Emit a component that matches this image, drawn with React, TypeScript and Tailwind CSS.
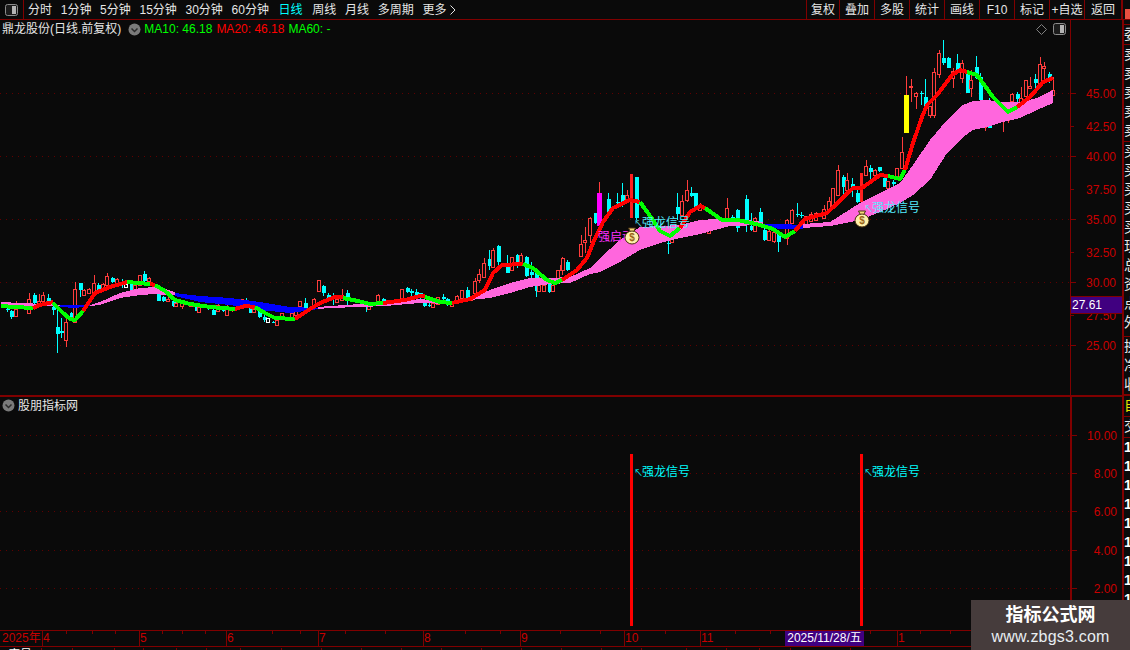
import React from "react";

type Pt = [number, number];
type Band = [number, number, number];
type Candle = [number, number, number, number, number, string];

// candles read off 3x crops: [x, wick top, body top, body bottom, wick bottom, kind]
const zone = (ox: number, oy: number, rows: Candle[]): Candle[] =>
    rows.map(([x, hi, t, b, lo, k]) => [
        Math.round(ox + x / 3),
        oy + hi / 3,
        oy + t / 3,
        oy + b / 3,
        oy + lo / 3,
        k,
    ]);

const candles: Candle[] = [
    ...zone(0, 260, [
        [20, 140, 146, 149, 155, "c"],
        [33, 150, 152, 170, 176, "c"],
        [48, 123, 148, 170, 172, "r"],
        [72, 130, 138, 145, 150, "r"],
        [88, 100, 118, 160, 162, "r"],
        [103, 100, 105, 130, 132, "c"],
        [118, 103, 125, 135, 138, "r"],
        [130, 95, 105, 125, 128, "r"],
        [145, 102, 113, 125, 130, "c"],
        [158, 125, 140, 150, 165, "c"],
        [172, 150, 200, 222, 278, "c"],
        [184, 175, 212, 218, 235, "c"],
        [199, 170, 187, 242, 262, "r"],
        [213, 155, 160, 175, 178, "c"],
        [226, 66, 88, 188, 190, "r"],
        [241, 70, 70, 90, 110, "c"],
        [253, 88, 92, 105, 108, "r"],
        [268, 85, 88, 100, 103, "r"],
        [283, 45, 70, 100, 102, "r"],
        [295, 70, 75, 90, 92, "c"],
        [310, 70, 72, 85, 88, "r"],
        [322, 40, 48, 75, 78, "r"],
        [337, 50, 55, 65, 70, "c"],
        [352, 55, 58, 70, 72, "r"],
        [365, 58, 70, 72, 85, "c"],
        [378, 70, 72, 82, 83, "w"],
        [392, 70, 72, 92, 95, "c"],
        [406, 72, 75, 90, 92, "r"],
        [421, 45, 45, 75, 78, "r"],
        [433, 33, 42, 62, 72, "c"],
        [447, 52, 55, 65, 68, "r"],
        [475, 95, 100, 122, 124, "c"],
        [490, 108, 112, 122, 126, "c"],
        [503, 110, 118, 124, 126, "r"],
        [518, 118, 123, 138, 142, "c"],
        [528, 126, 130, 140, 142, "r"],
        [545, 125, 130, 140, 147, "r"],
        [572, 125, 128, 138, 140, "r"],
        [587, 130, 135, 152, 154, "c"],
        [598, 140, 143, 158, 160, "r"],
        [625, 135, 138, 148, 150, "c"],
        [640, 148, 150, 165, 166, "c"],
        [655, 132, 135, 155, 157, "r"],
        [668, 145, 148, 152, 155, "c"],
        [682, 135, 140, 167, 168, "r"],
        [695, 142, 145, 152, 155, "r"],
        [725, 116, 118, 130, 132, "r"],
        [737, 113, 122, 130, 132, "c"],
        [750, 142, 145, 158, 160, "c"],
        [763, 143, 148, 158, 160, "r"],
        [778, 150, 153, 172, 175, "c"],
        [793, 160, 172, 180, 187, "c"],
        [805, 175, 176, 188, 189, "w"],
        [820, 182, 185, 187, 188, "c"],
        [832, 178, 180, 197, 198, "r"],
        [847, 158, 160, 178, 180, "r"],
        [862, 170, 172, 182, 184, "r"],
        [875, 158, 160, 178, 180, "r"],
        [888, 150, 155, 165, 168, "r"],
        [900, 124, 125, 140, 142, "r"],
        [915, 115, 128, 145, 148, "c"],
        [943, 115, 118, 140, 142, "r"],
        [957, 60, 62, 95, 97, "r"],
    ]),
    ...zone(320, 230, [
        [10, 165, 168, 190, 197, "c"],
        [25, 188, 195, 210, 213, "c"],
        [38, 190, 200, 203, 225, "c"],
        [52, 205, 208, 218, 220, "r"],
        [67, 178, 195, 212, 214, "r"],
        [80, 180, 188, 205, 225, "c"],
        [137, 220, 222, 232, 245, "c"],
        [148, 225, 228, 238, 240, "r"],
        [175, 192, 195, 215, 217, "r"],
        [190, 205, 208, 215, 218, "c"],
        [245, 176, 178, 205, 207, "r"],
        [260, 172, 175, 185, 190, "c"],
        [273, 178, 182, 188, 198, "c"],
        [287, 178, 185, 200, 202, "c"],
        [300, 188, 190, 205, 208, "c"],
        [313, 215, 218, 228, 232, "c"],
        [328, 218, 224, 226, 232, "c"],
        [340, 217, 220, 232, 234, "r"],
        [355, 200, 203, 222, 224, "r"],
        [370, 192, 200, 208, 210, "c"],
        [382, 205, 208, 225, 227, "c"],
        [397, 215, 218, 228, 230, "r"],
        [410, 196, 198, 212, 214, "r"],
        [425, 180, 182, 205, 207, "r"],
        [440, 170, 180, 205, 207, "c"],
        [452, 202, 205, 210, 212, "r"],
        [466, 145, 155, 190, 192, "r"],
        [478, 118, 133, 150, 160, "r"],
        [493, 85, 100, 143, 145, "r"],
        [508, 60, 87, 108, 120, "c"],
        [520, 55, 60, 113, 115, "r"],
        [535, 45, 47, 97, 108, "c"],
        [562, 75, 110, 128, 130, "c"],
        [577, 80, 82, 122, 124, "r"],
        [590, 73, 75, 100, 115, "c"],
        [604, 70, 75, 97, 100, "r"],
        [617, 78, 82, 138, 140, "c"],
        [632, 95, 125, 135, 145, "c"],
        [647, 120, 125, 183, 200, "c"],
        [658, 140, 165, 183, 185, "r"],
        [672, 140, 165, 183, 185, "r"],
        [686, 155, 160, 185, 190, "c"],
        [700, 160, 165, 185, 187, "r"],
        [713, 120, 122, 160, 162, "r"],
        [727, 82, 105, 120, 135, "r"],
    ]),
    ...zone(560, 160, [
        [22, 300, 305, 330, 332, "c"],
        [8, 293, 295, 330, 332, "r"],
        [62, 225, 252, 290, 292, "r"],
        [76, 200, 240, 246, 280, "r"],
        [90, 172, 175, 225, 250, "r"],
        [105, 158, 160, 190, 192, "c"],
        [118, 65, 102, 104, 110, "r"],
        [145, 100, 118, 155, 175, "c"],
        [172, 100, 126, 130, 145, "c"],
        [187, 70, 105, 125, 140, "c"],
        [200, 90, 105, 125, 127, "r"],
        [229, 50, 52, 175, 180, "c"],
        [323, 235, 248, 252, 282, "c"],
        [337, 230, 232, 248, 250, "r"],
        [352, 100, 140, 162, 180, "c"],
        [365, 105, 125, 165, 167, "r"],
        [380, 60, 90, 122, 125, "r"],
        [394, 80, 98, 108, 110, "c"],
        [406, 98, 100, 142, 145, "c"],
        [420, 130, 135, 150, 152, "r"],
        [448, 203, 205, 220, 222, "r"],
        [502, 115, 145, 185, 187, "r"],
        [517, 165, 170, 185, 190, "c"],
        [530, 148, 150, 205, 215, "c"],
        [558, 105, 118, 185, 215, "c"],
        [572, 160, 198, 210, 212, "c"],
        [586, 172, 175, 215, 217, "r"],
        [600, 143, 155, 190, 192, "c"],
        [613, 205, 210, 240, 242, "c"],
        [628, 205, 215, 240, 242, "r"],
        [642, 215, 218, 245, 248, "r"],
        [655, 212, 215, 245, 275, "c"],
        [682, 178, 180, 235, 255, "r"],
        [696, 146, 150, 190, 192, "r"],
        [710, 130, 163, 166, 170, "c"],
        [724, 155, 164, 166, 175, "c"],
        [737, 168, 170, 195, 197, "r"],
        [752, 155, 162, 185, 187, "r"],
        [767, 155, 160, 180, 182, "r"],
        [792, 135, 148, 175, 177, "r"],
        [806, 110, 125, 150, 152, "r"],
        [820, 83, 85, 145, 147, "r"],
        [835, 15, 30, 105, 107, "r"],
        [848, 45, 50, 80, 110, "c"],
        [862, 40, 60, 90, 92, "r"],
        [875, 55, 72, 82, 110, "c"],
        [890, 90, 100, 125, 130, "c"],
        [917, 0, 20, 45, 47, "r"],
        [930, 15, 25, 35, 65, "c"],
        [945, 28, 30, 45, 47, "r"],
        [958, 20, 22, 32, 35, "c"],
        [973, 50, 55, 80, 82, "c"],
        [985, 63, 65, 85, 87, "r"],
        [1000, 60, 65, 72, 80, "c"],
    ]),
    ...zone(880, 40, [
        [52, 383, 385, 415, 417, "r"],
        [67, 292, 337, 385, 387, "r"],
        [79, 108, 165, 165, 165, "r"],
        [94, 118, 138, 143, 185, "r"],
        [109, 155, 160, 168, 207, "r"],
        [122, 152, 160, 163, 195, "c"],
        [136, 118, 172, 205, 207, "c"],
        [149, 198, 200, 225, 235, "r"],
        [163, 85, 97, 225, 235, "r"],
        [178, 30, 40, 103, 115, "r"],
        [190, 0, 55, 70, 75, "c"],
        [205, 50, 55, 83, 85, "c"],
        [218, 85, 95, 115, 145, "r"],
        [232, 42, 70, 92, 95, "c"],
        [247, 60, 70, 115, 130, "r"],
        [260, 95, 100, 158, 160, "c"],
        [274, 90, 120, 145, 170, "r"],
        [287, 48, 82, 115, 117, "c"],
        [300, 100, 110, 180, 182, "c"],
        [316, 180, 260, 262, 272, "r"],
        [328, 175, 253, 263, 265, "c"],
        [370, 225, 240, 242, 275, "r"],
        [385, 220, 230, 240, 250, "r"],
        [397, 158, 163, 185, 187, "r"],
        [411, 155, 162, 178, 205, "c"],
        [424, 140, 175, 190, 192, "r"],
        [438, 120, 122, 170, 172, "r"],
        [451, 110, 140, 146, 148, "r"],
        [465, 102, 118, 130, 150, "c"],
        [480, 52, 72, 135, 137, "r"],
        [493, 65, 78, 84, 130, "r"],
        [508, 95, 103, 115, 130, "c"],
        [520, 110, 150, 165, 167, "r"],
    ]),
];

const lineSegs: [string, Pt[]][] = [
    ["#00ff00", [[1, 306], [15, 307], [33, 308]]],
    ["#ff0000", [[33, 308], [40, 305], [53, 302]]],
    ["#00ff00", [[53, 303], [62, 312], [70, 319], [75, 320], [83, 311]]],
    ["#ff0000", [[83, 311], [95, 293], [110, 287], [127, 282]]],
    ["#00ff00", [[127, 282], [150, 284]]],
    ["#ff0000", [[150, 284], [155, 285]]],
    ["#00ff00", [[155, 285], [165, 291], [175, 300], [190, 304], [210, 307], [235, 309]]],
    ["#ff0000", [[235, 309], [245, 306], [255, 307]]],
    ["#00ff00", [[255, 307], [265, 313], [275, 318], [295, 319]]],
    ["#ff0000", [[295, 319], [310, 309], [320, 303], [335, 297], [343, 297]]],
    ["#00ff00", [[343, 298], [358, 301], [370, 304], [383, 303]]],
    ["#ff0000", [[383, 303], [405, 300], [420, 296], [425, 296]]],
    ["#00ff00", [[425, 297], [440, 302], [452, 303]]],
    ["#ff0000", [[452, 303], [470, 299], [485, 290], [493, 273], [502, 265], [523, 264]]],
    ["#00ff00", [[523, 264], [533, 268], [547, 280], [555, 283], [562, 280]]],
    ["#ff0000", [[562, 280], [577, 270], [587, 258], [593, 243], [603, 222], [613, 208], [630, 200], [640, 202]]],
    ["#00ff00", [[640, 202], [653, 220], [660, 231], [670, 236], [680, 228]]],
    ["#ff0000", [[680, 228], [690, 212], [700, 206], [705, 208]]],
    ["#00ff00", [[705, 208], [722, 220], [738, 220], [760, 225], [773, 229], [785, 237], [795, 231]]],
    ["#ff0000", [[795, 231], [805, 219], [827, 213], [853, 188], [862, 188], [880, 175], [888, 176]]],
    ["#00ff00", [[888, 176], [900, 179], [905, 170]]],
    ["#ff0000", [[905, 170], [913, 143], [922, 117], [927, 105], [937, 95], [952, 75], [960, 70], [967, 72]]],
    ["#00ff00", [[967, 72], [977, 75], [993, 97], [1008, 112], [1017, 107]]],
    ["#ff0000", [[1017, 107], [1030, 97], [1043, 82], [1053, 78]]],
];

const bandSegs: [string, Band[]][] = [
    ["#ff66dd", [[1, 302, 306], [20, 303, 306], [45, 304, 306], [60, 305, 306]]],
    ["#0000ff", [[60, 305, 307], [75, 305, 308], [90, 305, 306]]],
    ["#ff66dd", [[90, 305, 306], [100, 302, 305], [120, 293, 298], [140, 288, 295], [155, 287, 294], [165, 289, 295], [175, 292, 295]]],
    ["#0000ff", [[175, 293, 296], [200, 296, 302], [230, 298, 305], [260, 302, 310], [290, 307, 313], [318, 308, 309]]],
    ["#ff66dd", [[318, 307, 309], [330, 306, 308], [360, 304, 307], [385, 303, 306], [420, 299, 303], [450, 302, 304], [470, 297, 300], [490, 290, 298], [510, 283, 293], [530, 278, 287], [550, 278, 284], [570, 277, 283], [590, 268, 274], [600, 258, 272], [620, 240, 262], [640, 227, 250], [660, 226, 243], [680, 225, 238], [700, 220, 234], [730, 218, 226], [763, 222, 225]]],
    ["#0000ff", [[763, 224, 226], [780, 224, 229], [803, 225, 229]]],
    ["#ff66dd", [[803, 224, 228], [830, 222, 226], [860, 203, 220], [880, 193, 212], [900, 183, 203], [913, 165, 195], [930, 140, 180], [947, 120, 153], [963, 105, 137], [973, 101, 130], [987, 100, 127], [1003, 102, 122], [1020, 102, 118], [1037, 98, 110], [1053, 90, 103]]],
];

const toPoints = (pts: Pt[]) => pts.map((p) => p.join(",")).join(" ");
const bandPoints = (b: Band[]) =>
    toPoints([...b.map(([x, t]): Pt => [x, t]), ...[...b].reverse().map(([x, , l]): Pt => [x, l])]);

const tabs = ["分时", "1分钟", "5分钟", "15分钟", "30分钟", "60分钟", "日线", "周线", "月线", "多周期"];
const tools = ["复权", "叠加", "多股", "统计", "画线", "F10", "标记", "+自选", "返回"];
const months: [string, string][] = [
    ["2025年", "w-[42px]"],
    ["4", "w-[97px]"],
    ["5", "w-[87px]"],
    ["6", "w-[92px]"],
    ["7", "w-[105px]"],
    ["8", "w-[97px]"],
    ["9", "w-[104px]"],
    ["10", "w-[76px]"],
    ["11", "w-[197px]"],
    ["1", "flex-1"],
];
const timeTicks = [66, 92, 115, 162, 182, 205, 272, 300, 345, 385, 465, 500, 560, 600, 665, 735, 770, 870, 920, 950];
const footCells = [42, 31, 42, 29, 33, 30, 34, 41, 40, 40, 40, 40, 40, 40, 40, 40, 40, 45, 40, 33, 31, 60];

const PanelToggle = () => (
    <svg width="13" height="12" viewBox="0 0 13 12">
        <rect x="0.5" y="0.5" width="12" height="11" rx="2" fill="#1c1c1c" stroke="#8c8c8c" />
        <rect x="7" y="2" width="4" height="8" fill="#b4b4b4" />
    </svg>
);

const RoundChevron = () => (
    <svg width="13" height="13" viewBox="0 0 13 13">
        <circle cx="6.5" cy="6.5" r="6" fill="#7a7a7a" />
        <path d="M3.5 5.5 L6.5 8.5 L9.5 5.5" fill="none" stroke="#2a2a2a" strokeWidth="1.5" />
    </svg>
);

const Bag = ({ x, y }: { x: number; y: number }) => (
    <g transform={`translate(${x} ${y})`}>
        <path d="M-3.5 -8 L3.5 -8 L1.5 -4 L-1.5 -4 Z" fill="#f4d878" stroke="#4a3010" />
        <ellipse cx="0" cy="1.5" rx="7" ry="6.5" fill="#fff0a8" stroke="#4a3010" />
        <text x="0" y="5" textAnchor="middle" fontSize="10" fontWeight="700" fill="#9a6418">
            $
        </text>
    </g>
);

const Signal = ({ x, y, color }: { x: number; y: number; color: string }) => (
    <text y={y} fontSize="12" fill={color}>
        <tspan x={x} fontSize="9">
            ↖
        </tspan>
        <tspan x={x + 8}>强龙信号</tspan>
    </text>
);

const PriceChart = () => (
    <svg className="absolute inset-0" width="1070" height="376" viewBox="0 20 1070 376" shapeRendering="crispEdges">
        {[93.5, 156.5, 219.5, 282.5, 345.5].map((y) => (
            <line key={y} x1="0" x2="1070" y1={y} y2={y} stroke="#600000" strokeDasharray="1 5" />
        ))}
        {candles.map(([x, hi, t, b, lo, k], i) => {
            const color = k === "c" ? "#00ffff" : k === "w" ? "#ffffff" : "#ff3c3c";
            return (
                <g key={i}>
                    <line x1={x + 0.5} x2={x + 0.5} y1={hi} y2={lo} stroke={color} />
                    <rect
                        x={x - 1.5}
                        y={t}
                        width={k === "c" ? 4 : 3}
                        height={Math.max(b - t, 1)}
                        fill={k === "c" ? "#00ffff" : "#0a0a0a"}
                        stroke={k === "c" ? "none" : color}
                    />
                </g>
            );
        })}
        {bandSegs.map(([color, pts], i) => (
            <polygon key={i} points={bandPoints(pts)} fill={color} />
        ))}
        <rect x="597" y="193" width="5" height="33" fill="#ff00ff" />
        <rect x="630" y="174" width="3" height="44" fill="#ff2020" />
        <rect x="860" y="173" width="3" height="29" fill="#ff2020" />
        <rect x="904" y="95" width="5" height="38" fill="#ffff00" />
        {lineSegs.map(([color, pts], i) => (
            <polyline key={i} points={toPoints(pts)} fill="none" stroke={color} strokeWidth="4" strokeLinejoin="round" />
        ))}
        <g shapeRendering="auto">
            <text x="598" y="241" fontSize="12" fill="#ff30ff">
                强启动
            </text>
            <Signal x={634} y={227} color="#55ecff" />
            <Signal x={864} y={212} color="#55ecff" />
            <Bag x={632} y={236} />
            <Bag x={862} y={219} />
        </g>
    </svg>
);

const IndicatorChart = () => (
    <svg className="absolute inset-0" width="1070" height="233" viewBox="0 397 1070 233" shapeRendering="crispEdges">
        {[435.5, 473.5, 511.5, 550.5, 588.5].map((y) => (
            <line key={y} x1="0" x2="1070" y1={y} y2={y} stroke="#600000" strokeDasharray="1 5" />
        ))}
        <rect x="630" y="454" width="3" height="172" fill="#ff0000" />
        <rect x="860" y="454" width="3" height="172" fill="#ff0000" />
        <g shapeRendering="auto">
            <Signal x={634} y={476} color="#00ffff" />
            <Signal x={864} y={476} color="#00ffff" />
        </g>
    </svg>
);

const Axis = ({ top, height, ticks }: { top: number; height: number; ticks: [number, string][] }) => (
    <svg className="absolute inset-0" width="51" height={height} viewBox={`1071 ${top} 51 ${height}`}>
        {ticks.map(([y, label]) => (
            <g key={y}>
                <line
                    x1="1071"
                    x2={label.endsWith("0.00") || label.endsWith("5.00") || label.length < 5 ? "1076" : "1074"}
                    y1={y + 0.5}
                    y2={y + 0.5}
                    stroke="#800000"
                    shapeRendering="crispEdges"
                />
                <text x="1116" y={y + 4.5} textAnchor="end" fontSize="12" fill="#c80000">
                    {label}
                </text>
            </g>
        ))}
    </svg>
);

const priceTicks: [number, string][] = [
    [93, "45.00"],
    [126, "42.50"],
    [156, "40.00"],
    [189, "37.50"],
    [219, "35.00"],
    [252, "32.50"],
    [282, "30.00"],
    [315, "27.50"],
    [345, "25.00"],
];
const indicatorTicks: [number, string][] = [
    [435, "10.00"],
    [473, "8.00"],
    [511, "6.00"],
    [550, "4.00"],
    [588, "2.00"],
];

const SideCol = () => (
    <div className="w-2 shrink-0 border-l-2 border-[#800000] overflow-hidden text-[14px] leading-[19px] text-[#e8e8e8]">
        <div className="h-[5px] border-b border-[#800000]" />
        <div className="h-[20px] border-b border-[#800000]">委</div>
        <div className="h-[97px] border-b border-[#800000]">
            {"卖卖卖卖卖".split("").map((c, i) => (
                <div key={i}>{c}</div>
            ))}
        </div>
        <div className="h-[195px] border-b border-[#800000]">
            {"买买买买买现总资点外".split("").map((c, i) => (
                <div key={i}>{c}</div>
            ))}
        </div>
        <div className="h-[59px] border-b-2 border-[#800000]">
            {"换净收".split("").map((c, i) => (
                <div key={i}>{c}</div>
            ))}
        </div>
        <div className="h-[21px] border-b border-[#800000] text-[#e6e600]">自</div>
        <div className="h-[21px] border-b border-[#800000]">交</div>
        <div className="font-bold text-[14px] text-white">
            {Array.from({ length: 9 }, (_, i) => (
                <div key={i}>1</div>
            ))}
        </div>
    </div>
);

const TopBar = () => (
    <div className="flex h-5 shrink-0 items-center border-b border-[#800000] text-[12px] text-[#e6e6e6]">
        <div className="flex h-full w-6 items-center justify-center border-r border-[#800000]">
            <PanelToggle />
        </div>
        <div className="ml-1 flex items-center gap-[8.7px]">
            {tabs.map((t) => (
                <span
                    key={t}
                    className={t === "日线" ? "ml-[1px] text-[#00ffff]" : t === "周线" ? "ml-[1px]" : ""}
                >
                    {t}
                </span>
            ))}
            <span className="flex items-center">
                更多
                <svg width="8" height="10" viewBox="0 0 8 10" className="ml-[3px]">
                    <path d="M1.5 0.5 L6 5 L1.5 9.5" fill="none" stroke="#e6e6e6" />
                </svg>
            </span>
        </div>
        <div className="ml-auto flex h-full">
            {tools.map((t, i) => (
                <div
                    key={t}
                    className={`flex h-full items-center justify-center border-l border-[#800000] ${
                        i === 0 ? "w-[33px]" : i === tools.length - 1 ? "w-[37px]" : "w-[35px]"
                    }`}
                >
                    {t}
                </div>
            ))}
            <div className="flex h-full w-[9px] items-end border-l-2 border-[#800000] pl-[2px]">
                <div className="h-[10px] w-[5px] bg-[#e85040]" />
            </div>
        </div>
    </div>
);

const PricePane = () => (
    <div className="flex h-[377px] shrink-0 border-b-2 border-[#800000]">
        <div className="relative w-[1070px] shrink-0">
            <PriceChart />
            <div className="relative flex h-[18px] items-center pl-[2px] text-[12px]">
                <span className="text-[#e6e6e6]">鼎龙股份(日线.前复权)</span>
                <span className="ml-[7px]">
                    <RoundChevron />
                </span>
                <span className="ml-[3px] text-[#00ff00]">MA10: 46.18</span>
                <span className="ml-[4px] text-[#ff0000]">MA20: 46.18</span>
                <span className="ml-[4px] text-[#00ff00]">MA60: -</span>
                <div className="ml-auto mr-[4px] flex items-center gap-[6px]">
                    <svg width="11" height="11" viewBox="0 0 11 11">
                        <path d="M5.5 0.5 L10.5 5.5 L5.5 10.5 L0.5 5.5 Z" fill="none" stroke="#808080" />
                    </svg>
                    <PanelToggle />
                </div>
            </div>
        </div>
        <div className="relative flex-1 border-l border-[#800000]">
            <Axis top={20} height={376} ticks={priceTicks} />
            <div className="absolute left-0 right-0 top-[276px] flex h-[18px] items-center border-y border-[#800000] bg-[#400080] pl-[1px] text-[12px] text-white">
                27.61
            </div>
        </div>
    </div>
);

const IndicatorPane = () => (
    <div className="flex h-[233px] shrink-0">
        <div className="relative w-[1070px] shrink-0">
            <IndicatorChart />
            <div className="relative flex h-[17px] items-center pl-[2px] text-[12px] text-[#e6e6e6]">
                <RoundChevron />
                <span className="ml-[3px]">股朋指标网</span>
            </div>
        </div>
        <div className="relative flex-1 border-l-2 border-[#800000]">
            <Axis top={397} height={233} ticks={indicatorTicks} />
        </div>
    </div>
);

const TimeAxis = () => (
    <div className="relative flex h-[17px] shrink-0 border-y border-[#800000] text-[12px] leading-[15px] text-[#c80000]">
        {months.map(([label, width], i) => (
            <div key={label} className={`${width} ${i > 0 ? "border-l border-[#800000]" : "pl-[2px]"}`}>
                {label}
            </div>
        ))}
        <div className="absolute left-[785px] top-0 h-[15px] w-[79px] bg-[#400080] text-center text-white">
            2025/11/28/五
        </div>
        <svg className="absolute inset-0" width="1122" height="3">
            {timeTicks.map((x) => (
                <line key={x} x1={x + 0.5} x2={x + 0.5} y1="0" y2="3" stroke="#800000" />
            ))}
        </svg>
    </div>
);

const App = () => {
    return (
        <div
            className="relative flex h-[650px] w-[1130px] flex-col overflow-hidden bg-[#0a0a0a]"
            style={{ fontFamily: '"Liberation Sans", "Noto Sans CJK SC", sans-serif' }}
        >
            <TopBar />
            <div className="flex min-h-0 flex-1">
                <div className="flex w-[1122px] shrink-0 flex-col">
                    <PricePane />
                    <IndicatorPane />
                    <TimeAxis />
                    <div className="flex pt-[1px] text-[12px] leading-[14px] text-white">
                        {footCells.map((w, i) => (
                            <div
                                key={i}
                                className="shrink-0 overflow-hidden border-r border-[#800000] pl-2"
                                style={{ width: w }}
                            >
                                {i === 0 ? "序号" : i === 1 ? "1" : ""}
                            </div>
                        ))}
                    </div>
                </div>
                <SideCol />
            </div>
            <div className="absolute bottom-0 right-0 flex h-[50px] w-[159px] flex-col items-center justify-center bg-[#463c3c]">
                <span className="text-[18px] font-bold leading-[24px] text-white">指标公式网</span>
                <span className="text-[16px] leading-[20px] tracking-[0.2px] text-[#e8eef2]">www.zbgs3.com</span>
            </div>
        </div>
    );
};

export default App;
